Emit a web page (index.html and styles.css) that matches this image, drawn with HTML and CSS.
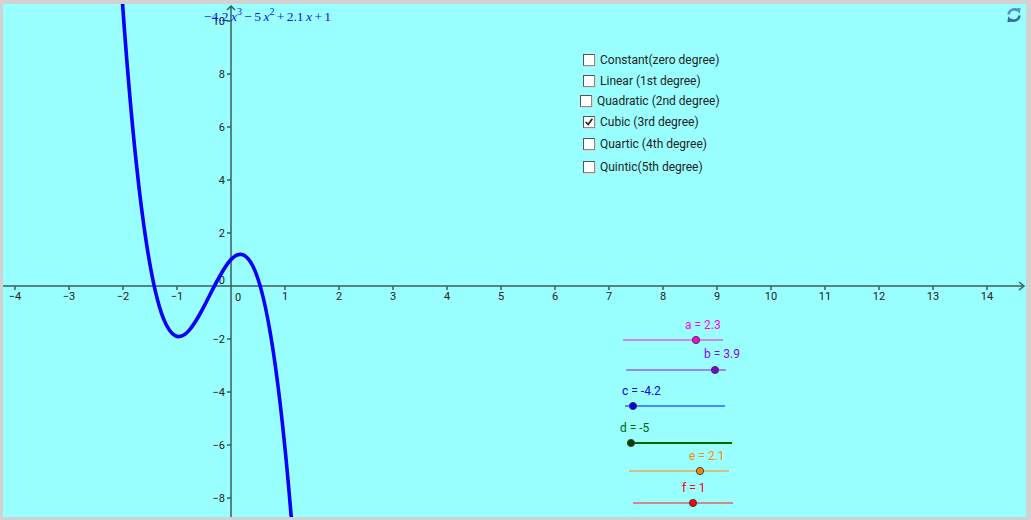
FILE: index.html
```html
<!DOCTYPE html>
<html>
<head>
<meta charset="utf-8">
<link rel="stylesheet" href="styles.css">
</head>
<body>
<div class="applet">
  <svg class="graph" width="1023" height="513" viewBox="3 4 1023 513">
    <!-- axes -->
    <g class="axis">
      <line x1="3" y1="286" x2="1024" y2="286"/>
      <polyline class="arrow" points="1019,282 1024,286 1019,290"/>
      <line x1="231" y1="6" x2="231" y2="517"/>
      <polyline class="arrow" points="227,10 231,6 235,10"/>
      <!-- x ticks -->
      <path d="M15 286v4M69 286v4M123 286v4M177 286v4M285 286v4M339 286v4M393 286v4M447 286v4M501 286v4M555 286v4M609 286v4M663 286v4M717 286v4M771 286v4M825 286v4M879 286v4M933 286v4M987 286v4"/>
      <!-- y ticks -->
      <path d="M227 21h4M227 74h4M227 127h4M227 180h4M227 233h4M227 339h4M227 392h4M227 445h4M227 498h4"/>
    </g>
    <g class="xlabels">
      <text x="15" y="300">−4</text>
      <text x="69" y="300">−3</text>
      <text x="123" y="300">−2</text>
      <text x="177" y="300">−1</text>
      <text x="238" y="301">0</text>
      <text x="285" y="300">1</text>
      <text x="339" y="300">2</text>
      <text x="393" y="300">3</text>
      <text x="447" y="300">4</text>
      <text x="501" y="300">5</text>
      <text x="555" y="300">6</text>
      <text x="609" y="300">7</text>
      <text x="663" y="300">8</text>
      <text x="717" y="300">9</text>
      <text x="771" y="300">10</text>
      <text x="825" y="300">11</text>
      <text x="879" y="300">12</text>
      <text x="933" y="300">13</text>
      <text x="987" y="300">14</text>
    </g>
    <g class="ylabels">
      <text x="225" y="25">10</text>
      <text x="225" y="78">8</text>
      <text x="225" y="131">6</text>
      <text x="225" y="184">4</text>
      <text x="225" y="237">2</text>
      <text x="225" y="284">0</text>
      <text x="225" y="343">−2</text>
      <text x="225" y="396">−4</text>
      <text x="225" y="449">−6</text>
      <text x="225" y="502">−8</text>
    </g>
    <!-- function graph -->
    <path class="curve" d="M117.6,-70.05 C177,876.33 236.4,-241.64 295.8,575.85"/>
    <!-- sliders -->
    <g class="slider sa">
      <text x="685" y="329">a = 2.3</text>
      <line x1="623" y1="340" x2="723" y2="340"/>
      <circle cx="696" cy="340" r="3.6"/>
    </g>
    <g class="slider sb">
      <text x="704" y="358">b = 3.9</text>
      <line x1="626" y1="370" x2="726" y2="370"/>
      <circle cx="715" cy="370" r="3.6"/>
    </g>
    <g class="slider sc">
      <text x="622" y="395">c = -4.2</text>
      <line x1="625" y1="406" x2="725" y2="406"/>
      <circle cx="633" cy="406" r="3.6"/>
    </g>
    <g class="slider sd">
      <text x="620" y="432">d = -5</text>
      <line x1="628" y1="443" x2="732" y2="443"/>
      <circle cx="631" cy="443" r="3.6"/>
    </g>
    <g class="slider se">
      <text x="689" y="460">e = 2.1</text>
      <line x1="629" y1="471" x2="729" y2="471"/>
      <circle cx="700" cy="471" r="3.6"/>
    </g>
    <g class="slider sf">
      <text x="682" y="492">f = 1</text>
      <line x1="633" y1="503" x2="733" y2="503"/>
      <circle cx="693" cy="503" r="3.6"/>
    </g>
  </svg>

  <div class="formula">−4.2 <i>x</i><sup>3</sup> − 5 <i>x</i><sup>2</sup> + 2.1 <i>x</i> + 1</div>

  <label class="check r1"><span class="box"></span>Constant(zero degree)</label>
  <label class="check r2"><span class="box"></span>Linear (1st degree)</label>
  <label class="check r3"><span class="box"></span>Quadratic (2nd degree)</label>
  <label class="check r4"><span class="box checked"><svg viewBox="0 0 12 12" width="10" height="10"><path d="M2 6 L5 9 L10 2" /></svg></span>Cubic (3rd degree)</label>
  <label class="check r5"><span class="box"></span>Quartic (4th degree)</label>
  <label class="check r6"><span class="box"></span>Quintic(5th degree)</label>

  <svg class="refresh" width="16" height="16" viewBox="0 0 16 16">
    <path class="ra" d="M2.6 7.5 A5.4 5.4 0 0 1 11.4 3.6"/>
    <path class="rh" d="M8.6 1.6 L14.6 0.8 L13.8 6.8 Z"/>
    <path class="rb" d="M13.4 8.5 A5.4 5.4 0 0 1 4.6 12.4"/>
    <path class="rh2" d="M7.4 14.4 L1.4 15.2 L2.2 9.2 Z"/>
  </svg>
</div>
</body>
</html>
```

FILE: styles.css
```css
html, body {
  margin: 0;
  padding: 0;
}
body {
  background: #d2d2d2;
  width: 1031px;
  height: 520px;
  overflow: hidden;
}
.applet {
  position: relative;
  margin: 4px 0 0 3px;
  width: 1023px;
  height: 513px;
  background: #99ffff;
  overflow: hidden;
  font-family: Roboto, "Liberation Sans", sans-serif;
}
.graph {
  display: block;
}
.axis line, .axis path, .axis polyline {
  stroke: #3e5c5c;
  stroke-width: 1.5;
  fill: none;
}
.xlabels text, .ylabels text {
  font-family: Roboto, "Liberation Sans", sans-serif;
  font-size: 11px;
  fill: #222;
}
.xlabels text { text-anchor: middle; }
.ylabels text { text-anchor: end; }
.curve {
  fill: none;
  stroke: #0000ff;
  stroke-width: 3.6;
}
.slider text {
  font-family: Roboto, "Liberation Sans", sans-serif;
  font-size: 12px;
}
.slider line { stroke-width: 2; }
.slider circle { stroke: #404040; stroke-width: 1; }
.sa text { fill: #ff00ff; }
.sa line { stroke: #cc88ee; }
.sa circle { fill: #ff00dd; }
.sb text { fill: #8800ff; }
.sb line { stroke: #9988ee; }
.sb circle { fill: #7700dd; }
.sc text { fill: #0000ff; }
.sc line { stroke: #4a88ff; }
.sc circle { fill: #0000ee; }
.sd text { fill: #006600; }
.sd line { stroke: #006600; }
.sd circle { fill: #004400; }
.se text { fill: #ff8800; }
.se line { stroke: #d0c088; }
.se circle { fill: #ff8800; }
.sf text { fill: #ff0000; }
.sf line { stroke: #d08888; }
.sf circle { fill: #ff0000; }

.formula {
  position: absolute;
  left: 201px;
  top: 5px;
  font-family: "Liberation Serif", serif;
  font-size: 13.5px;
  word-spacing: -1px;
  color: #1010ff;
  white-space: nowrap;
}
.formula sup {
  font-size: 10px;
  vertical-align: 6px;
  line-height: 0;
}

.check {
  position: absolute;
  left: 580px;
  display: flex;
  align-items: center;
  gap: 5px;
  font-size: 12px;
  color: #222;
  white-space: nowrap;
  height: 14px;
}
.r1 { top: 49px; }
.r2 { top: 70px; }
.r3 { top: 90px; left: 577px; }
.r4 { top: 111px; }
.r5 { top: 133px; }
.r6 { top: 156px; }
.box {
  width: 10px;
  height: 10px;
  background: #fff;
  border: 1px solid #8a8a8a;
  border-top-color: #555;
  border-left-color: #555;
  box-shadow: 1px 1px 0 #c8dede;
  display: flex;
  align-items: center;
  justify-content: center;
}
.box svg path {
  fill: none;
  stroke: #222;
  stroke-width: 2;
}
.refresh {
  position: absolute;
  left: 1003px;
  top: 3px;
}
.refresh .ra, .refresh .rb {
  fill: none;
  stroke-width: 2.6;
}
.refresh .ra { stroke: #5b8fd0; }
.refresh .rh { fill: #5b8fd0; }
.refresh .rb { stroke: #3a6aa8; }
.refresh .rh2 { fill: #3a6aa8; }
```
